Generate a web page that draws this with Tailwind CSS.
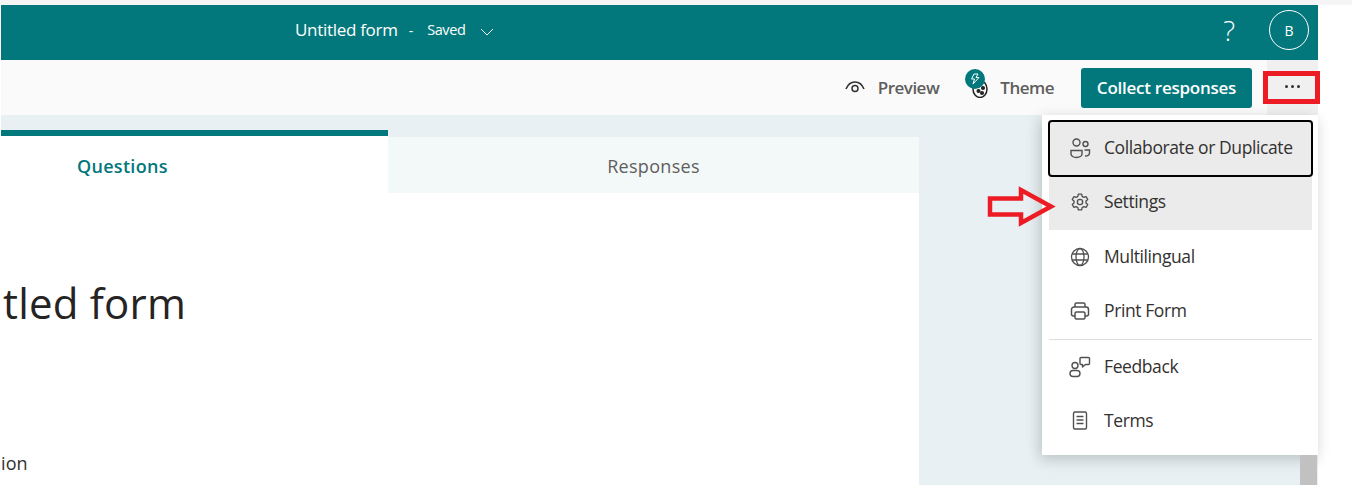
<!DOCTYPE html>
<html lang="en">

<head>
  <meta charset="UTF-8">
  <script src="https://cdn.jsdelivr.net/npm/@tailwindcss/browser@4"></script>
  <title>Untitled form</title>
</head>

<body class="bg-white font-['Open_Sans',sans-serif] text-[#323130] overflow-hidden">
  <div class="relative w-[1352px] h-[495px] overflow-hidden bg-white">
    <div class="h-[5px] bg-[#f5f5f5]"></div>

    <div class="ml-px w-[1317px] h-[480px] flex flex-col">
      <!-- header -->
      <header class="h-[55px] bg-[#03787c] text-white flex items-center shrink-0 pb-[5px]">
        <div class="ml-[294px] flex items-center">
          <span class="text-[17px] tracking-[-0.3px]">Untitled form</span>
          <span class="ml-[11px] text-[14px]">-</span>
          <span class="ml-[14px] text-[14.5px] tracking-[-0.4px]">Saved</span>
          <svg class="ml-[15px] mt-[3px]" width="14" height="8" viewBox="0 0 14 8" fill="none" stroke="#ffffff" stroke-width="1"><path d="M1 1l6 6 6-6" /></svg>
        </div>
        <span class="ml-auto text-[28px] font-light leading-none mr-[34px]">?</span>
        <div class="w-10 h-10 mr-[9px] rounded-full border border-white flex items-center justify-center text-[14px]">B</div>
      </header>

      <!-- command bar -->
      <div class="h-[55px] bg-[#fafafa] flex items-center justify-end shrink-0">
        <svg width="20" height="14" viewBox="0 0 20 14" fill="none" stroke="#323130" stroke-width="1.5" class="mb-[2px]">
          <path d="M1 9C3 4 6.500 2 10 2s7 2 9 7" />
          <circle cx="10" cy="8.500" r="3" />
        </svg>
        <span class="ml-[13px] text-[17px] font-semibold text-[#605e5c] tracking-[-0.5px]">Preview</span>
        <div class="relative ml-[26px] w-[26px] h-[30px]">
          <svg class="absolute left-[4px] top-[5px]" width="20" height="20" viewBox="0 0 20 20" fill="none" stroke="#242424" stroke-width="1.500">
            <ellipse cx="11" cy="11" rx="7" ry="8.500" />
            <circle cx="9.500" cy="13" r="1.300" fill="#242424" />
            <circle cx="14" cy="10" r="1.300" fill="#242424" />
            <circle cx="13" cy="15" r="1.300" fill="#242424" />
          </svg>
          <div class="absolute left-0 -top-[4px] w-5 h-5 rounded-full bg-[#03787c] flex items-center justify-center">
            <svg width="10" height="12" viewBox="0 0 10 12" fill="none" stroke="#ffffff" stroke-width="1"><path d="M4 1h4L6 4.500h3L3 11l1.500-5H1.500z" /></svg>
          </div>
        </div>
        <span class="ml-[9px] text-[17px] font-semibold text-[#605e5c] tracking-[-0.5px]">Theme</span>
        <button class="ml-[27px] w-[171px] h-10 rounded-[3px] bg-[#03787c] text-white text-[17px] font-semibold tracking-[-0.25px]">Collect responses</button>
        <div class="ml-[15px] w-[51px] h-[55px] bg-[#f0f0f0] flex items-center justify-center gap-[3px] pb-[2px]">
          <span class="w-[3px] h-[3px] rounded-full bg-[#323130]"></span>
          <span class="w-[3px] h-[3px] rounded-full bg-[#323130]"></span>
          <span class="w-[3px] h-[3px] rounded-full bg-[#323130]"></span>
        </div>
      </div>

      <!-- page body -->
      <main class="flex-1 bg-[#e8f0f3] pt-[15px] flex flex-col">
        <div class="w-[918px] flex-1 flex flex-col">
          <div class="flex items-end h-[63px] shrink-0">
            <div class="w-[387px] h-[63px] bg-white border-t-[6px] border-[#03787c] flex items-center text-[18px] font-semibold text-[#03787c] tracking-[0.3px] pl-[76px] pt-[4px]">Questions</div>
            <div class="flex-1 h-[56px] bg-[#f3f8f8] flex items-center justify-center text-[18px] text-[#605e5c] tracking-[0.3px] pt-[2px]">Responses</div>
          </div>
          <div class="flex-1 bg-white overflow-hidden">
            <div class="mt-[82px] ml-[-1px] flex justify-start">
              <span class="text-[42px] leading-[56px] text-[#252423] tracking-[0.2px] whitespace-nowrap w-[186px] flex justify-end">tled form</span>
            </div>
            <div class="mt-[120px] text-[18px] leading-6 tracking-[0.1px] text-[#323130]">ion</div>
          </div>
        </div>
      </main>
    </div>

    <!-- more menu -->
    <div class="absolute left-[1042px] top-[115px] w-[276px] h-[340px] bg-white shadow-[-2px_4px_14px_rgba(0,0,0,0.2)] pt-[5px] text-[17.500px] text-[#323130] tracking-[-0.4px]">
      <div class="ml-[6px] w-[265px] h-[57px] bg-[#ebebeb] border-2 border-black rounded-[4px] flex items-center pl-[19px] pb-[2px]">
        <svg width="22" height="22" viewBox="0 0 22 22" fill="none" stroke="#505050" stroke-width="1.400">
          <circle cx="7.500" cy="5.500" r="3.500" />
          <circle cx="16.500" cy="7" r="2.500" />
          <path d="M2 13.500h11v3.500c0 2-2.500 3.500-5.500 3.500S2 19 2 17z" />
          <path d="M15.500 13h5v3c0 1.800-1.800 3-4.500 3" />
        </svg>
        <span class="ml-[13px] whitespace-nowrap">Collaborate or Duplicate</span>
      </div>
      <div class="ml-[7px] w-[263px] h-[53px] bg-[#ebebeb] flex items-center pl-[21px] pb-[4px]">
        <svg width="20" height="20" viewBox="0 0 24 24" fill="none" stroke="#505050" stroke-width="1.600" stroke-linejoin="round">
          <circle cx="12" cy="12" r="3.200" />
          <path d="M10 2.500h4l.6 2.800 2 1.100 2.700-.9 2 3.500-2.100 1.900v2.200l2.100 1.900-2 3.500-2.700-.9-2 1.100-.6 2.800h-4l-.6-2.800-2-1.100-2.700.9-2-3.500 2.100-1.900v-2.200L2.700 9l2-3.500 2.700.9 2-1.100z" />
        </svg>
        <span class="ml-[14px]">Settings</span>
      </div>
      <div class="ml-[7px] w-[263px] h-[54px] flex items-center pl-[21px] pb-[1px]">
        <svg width="20" height="20" viewBox="0 0 20 20" fill="none" stroke="#505050" stroke-width="1.300">
          <circle cx="10" cy="10" r="8.500" />
          <ellipse cx="10" cy="10" rx="4" ry="8.500" />
          <path d="M2 7h16M2 13h16" />
        </svg>
        <span class="ml-[14px]">Multilingual</span>
      </div>
      <div class="ml-[7px] w-[263px] h-[55px] flex items-center pl-[21px] pb-[2px]">
        <svg width="20" height="20" viewBox="0 0 20 20" fill="none" stroke="#505050" stroke-width="1.500" stroke-linejoin="round">
          <path d="M5 6V3.500A1.500 1.500 0 0 1 6.500 2h7A1.500 1.500 0 0 1 15 3.500V6" />
          <path d="M5 15H3.500A2 2 0 0 1 1.500 13V8.500a2.500 2.500 0 0 1 2.500-2.500h12a2.500 2.500 0 0 1 2.500 2.500V13a2 2 0 0 1-2 2H15" />
          <rect x="5" y="11" width="10" height="7" rx="1.500" />
        </svg>
        <span class="ml-[14px]">Print Form</span>
      </div>
      <div class="ml-[7px] w-[263px] h-px bg-[#dedede]"></div>
      <div class="ml-[7px] w-[263px] h-[53px] flex items-center pl-[20px]">
        <svg width="22" height="22" viewBox="0 0 22 22" fill="none" stroke="#505050" stroke-width="1.400" stroke-linejoin="round">
          <circle cx="6" cy="9.500" r="3" />
          <rect x="1" y="14.500" width="10" height="6" rx="3" />
          <path d="M12 1.500h7.500a1 1 0 0 1 1 1v5a1 1 0 0 1-1 1h-3l-3 2.500V8.500H12a1 1 0 0 1-1-1v-5a1 1 0 0 1 1-1z" />
        </svg>
        <span class="ml-[13px]">Feedback</span>
      </div>
      <div class="ml-[7px] w-[263px] h-[54px] flex items-center pl-[21px]">
        <svg width="20" height="20" viewBox="0 0 20 20" fill="none" stroke="#505050" stroke-width="1.400">
          <rect x="3.500" y="2" width="13" height="17" rx="1.500" />
          <path d="M6.500 6.500h7M6.500 10h7M6.500 13.500h7" />
        </svg>
        <span class="ml-[14px]">Terms</span>
      </div>
    </div>

    <!-- scrollbar thumb under the menu -->
    <div class="absolute left-[1300px] top-[455px] w-[17px] h-[30px] bg-[#c1c1c1]"></div>

    <!-- red annotations -->
    <div class="absolute left-[1263px] top-[71px] w-[57px] h-[33px] border-[5px] border-[#ed1c24]"></div>
    <svg class="absolute left-[987px] top-[185px]" width="70" height="44" viewBox="0 0 70 44" fill="none" stroke="#ed1c24" stroke-width="4.500">
      <path d="M3 13.500H34V5L64 21.500 34 38V29.500H3z" />
    </svg>
  </div>
</body>

</html>
